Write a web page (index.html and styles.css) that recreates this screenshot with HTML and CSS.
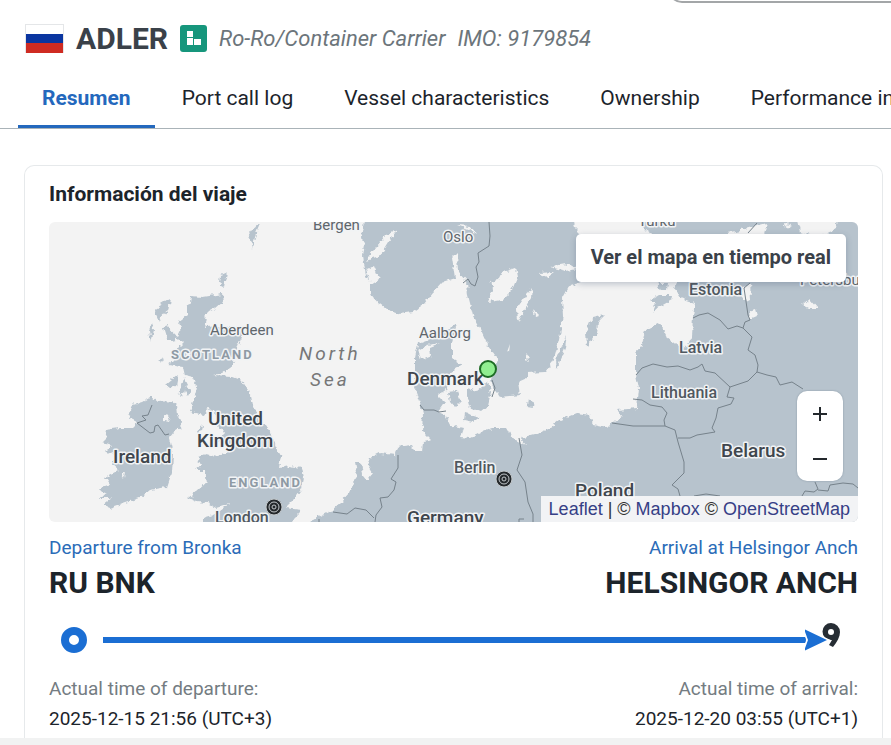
FILE: index.html
```html
<!DOCTYPE html>
<html lang="es">
<head>
    <meta charset="UTF-8">
    <meta name="viewport" content="width=device-width, initial-scale=1.0">
    <title>ADLER</title>
    <link rel="stylesheet" href="styles.css">
</head>
<body>
    <div class="search-edge"></div>

    <header class="vessel-header">
        <svg class="flag" viewBox="0 0 39 29" aria-hidden="true">
            <rect x="0.5" y="0.5" width="38" height="28" fill="#fff" stroke="#e4e6e8"/>
            <rect x="1" y="10" width="37" height="9" fill="#0a35a0"/>
            <rect x="1" y="19" width="37" height="10" fill="#cf2b22"/>
        </svg>
        <h1>ADLER</h1>
        <svg class="type-icon" viewBox="0 0 27 27" aria-hidden="true">
            <rect width="27" height="27" rx="3" fill="#16967c"/>
            <path d="M7 6h6v6H7zM7 13h6v7H7zM14 14h7v6h-7z" fill="#fff"/>
        </svg>
        <p class="vessel-type"><span>Ro-Ro/Container Carrier</span><span>IMO: 9179854</span></p>
    </header>

    <nav class="tabs">
        <a class="tab active" href="#resumen">Resumen</a>
        <a class="tab" href="#port-calls">Port call log</a>
        <a class="tab" href="#characteristics">Vessel characteristics</a>
        <a class="tab" href="#ownership">Ownership</a>
        <a class="tab" href="#performance">Performance insights</a>
    </nav>

    <main>
        <section class="card" id="resumen">
            <h2>Información del viaje</h2>

            <div class="map">
                <svg class="map-canvas" viewBox="49 222 809 300" preserveAspectRatio="xMidYMid slice" role="img" aria-label="Mapa">
                    <defs>
                        <filter id="coast" x="-5%" y="-5%" width="110%" height="110%" color-interpolation-filters="sRGB">
                            <feTurbulence type="fractalNoise" baseFrequency="0.2" numOctaves="2" seed="4"/>
                            <feDisplacementMap in="SourceGraphic" scale="6" xChannelSelector="R" yChannelSelector="G"/>
                        </filter>
                    </defs>

                    <g filter="url(#coast)">
                        <g class="land">
                            <!-- Great Britain -->
                            <path d="M191 296L203 297 222 294 223 302 216 308 209 312 204 317 207 321 205 327 225 326 243 330 242 336 238 347 230 358 234 364 222 373 213 375 232 376 240 379 249 390 252 405 262 420 272 435 276 447 281 456 279 468 290 466 302 468 304 478 302 488 295 498 285 508 302 510 293 519 290 530 203 530 203 518 213 515 220 511 230 504 217 508 207 503 197 502 188 498 197 491 207 482 205 470 196 470 202 465 198 457 206 454 217 457 228 452 226 444 218 440 224 434 218 424 215 412 208 409 205 415 190 412 193 402 197 388 193 378 185 376 183 367 168 365 178 358 177 348 182 343 177 338 182 328 178 322 187 315 187 308 190 303Z"/>
                            <!-- Ireland -->
                            <path d="M152 397L158 402 172 401 177 405 178 415 182 422 181 428 173 433 169 438 173 455 172 472 167 487 150 490 140 498 125 503 110 508 103 505 112 498 98 498 108 493 98 489 110 485 105 477 118 470 112 465 115 455 105 452 112 445 103 442 108 437 105 430 120 428 132 428 138 422 128 417 133 405 143 402Z"/>
                            <!-- Scottish isles, Orkney and Shetland -->
                            <path d="M170 299L157 307 155 312 159 321 164 314 168 311ZM152 324L154 330 151 342 149 331ZM163 327L168 325 172 332 178 336 174 342 167 340ZM166 385L178 375 176 386 170 388ZM184 378L179 397 183 394 187 384ZM187 385L191 390 188 396 184 391ZM220 275L227 272 224 287 219 283ZM260 224L255 236 253 249 251 240 247 237 253 229ZM203 424L202 431 196 433ZM158 361L164 358 161 363Z"/>
                            <!-- Norway and Sweden -->
                            <path d="M365 215L361 238 365 245 363 255 366 277 370 282 370 293 377 302 388 310 400 314 413 312 423 305 433 292 442 282 455 278 452 258 457 253 458 272 467 282 468 295 473 315 480 328 488 345 497 358 495 372 491 378 493 388 500 397 520 395 518 382 527 378 527 373 545 372 553 362 559 340 563 315 562 298 568 287 582 282 590 260 585 238 575 228 573 215Z"/>
                            <!-- Finland and north Russia -->
                            <path d="M638 215L645 230 660 240 720 236 790 260 770 275 700 272 677 280 675 290 680 298 695 303 693 315 692 338 683 349 667 337 660 323 645 330 642 345 636 352 636 375 639 388 637 408 617 410 623 417 612 423 607 428 593 425 590 415 577 413 560 420 550 428 535 434 520 438 526 445 513 438 507 428 493 428 482 432 470 438 460 437 463 428 450 425 445 415 438 412 445 402 438 395 447 388 450 372 462 365 452 358 452 342 457 323 440 335 418 343 415 358 415 388 420 402 423 415 422 430 432 440 423 442 422 452 415 452 412 445 397 447 395 455 380 453 370 458 367 465 372 473 367 480 363 475 361 462 355 462 357 472 350 492 340 503 332 510 313 520 300 530 870 530 870 215Z"/>
                            <!-- Danish and Baltic islands -->
                            <path d="M467 388L477 391 488 382 491 392 488 405 480 412 470 408 467 397ZM448 392L457 391 461 402 455 408 450 402ZM465 413L480 417 473 422 464 420ZM605 315L598 322 597 333 587 347 586 332 592 318ZM567 336L565 348 557 368 556 361 561 348ZM528 399L535 403 533 407 527 406ZM650 300L658 295 673 295 672 300 657 308 653 314 655 305ZM657 283L668 283 667 290 660 291Z"/>
                        </g>
                        <g class="water">
                            <path d="M503 272L515 268 517 278 512 290 502 300 488 302 493 288 490 282 499 280ZM532 287L531 298 518 322 517 308ZM533 309L538 315 535 316ZM510 344L509 353 507 352ZM526 354L529 358 526 361ZM538 273L555 272 548 277ZM553 266L565 264 562 268ZM164 415L170 416 168 422 164 421Z"/>
                            <path d="M377 247L386 236 397 230 388 243 380 256 366 261ZM366 270L374 266 379 278 370 284ZM418 350L427 345 440 343 430 347 431 356 421 360ZM550 267L570 264 578 269 566 271ZM440 392L447 397 443 402ZM457 225L471 226 476 234 470 230Z"/>
                            <path d="M796 215L800 232 815 237 833 232 839 215ZM741 289L750 283 751 300 745 303ZM749 311L755 309 757 316 750 319ZM803 305L810 299 818 308 809 308ZM727 233L745 229 767 223 764 235 730 238ZM782 224L793 225 787 228ZM122 474L125 472 124 477Z"/>
                        </g>
                    </g>

                    <g class="borders">
                        <path d="M152 405L148 415 142 416 146 420 137 423 150 433 154 432 155 426 158 425 165 435 169 434"/>
                        <path d="M489 222L490 236 489 246 478 253 479 262 476 267 478 277 475 286 471 284 468 279 463 283"/>
                        <path d="M492 380L495 388 492 397M420 405L424 410 434 410 439 412 446 411"/>
                        <path d="M398 455L398 468 391 479 396 482 394 490 388 497 380 498 382 507 376 515 375 522M333 512L347 514 355 508 366 510 374 518M319 519V522"/>
                        <path d="M519 438L522 455 517 470 525 482 528 502 533 514 533 522M519 522V519H524"/>
                        <path d="M612 423L633 426 665 426 675 430 678 442 684 462 684 473 672 485 678 489 680 496"/>
                        <path d="M633 399L642 400 650 405 662 407 667 413 664 420 665 426"/>
                        <path d="M636 375L642 368 653 364 667 367 678 366 690 370 698 367 702 364 705 371 715 373 730 387 748 381 757 372 758 365 755 355 748 350 752 337 743 328 737 326 728 329 720 320 708 313 699 315 693 318"/>
                        <path d="M750 283L744 288 748 315 750 320 745 322 743 328M748 233L757 223"/>
                        <path d="M757 372L767 375 776 377 780 385 792 382 803 389"/>
                        <path d="M730 387L727 397 734 398 731 404 718 408 716 418 712 428 715 432 709 433 697 435 690 438 678 438"/>
                        <path d="M802 496L805 491 814 492 818 489 815 482M818 490L828 491 830 485 843 483 853 484 858 488M694 496L706 494 720 496"/>
                    </g>

                    <g class="city">
                        <text x="313" y="230">Bergen</text>
                        <text x="443" y="242">Oslo</text>
                        <text x="638" y="226">Turku</text>
                        <text x="210" y="335">Aberdeen</text>
                        <text x="419" y="338">Aalborg</text>
                        <text x="800" y="285">Petersburg</text>
                    </g>
                    <g class="capital">
                        <text x="454" y="473">Berlin</text>
                        <text x="215" y="523">London</text>
                        <text x="689" y="295">Estonia</text>
                        <text x="679" y="353">Latvia</text>
                        <text x="651" y="398">Lithuania</text>
                    </g>
                    <g class="country">
                        <text x="208" y="425">United</text>
                        <text x="197" y="447">Kingdom</text>
                        <text x="113" y="463">Ireland</text>
                        <text x="407" y="385">Denmark</text>
                        <text x="407" y="524">Germany</text>
                        <text x="575" y="497">Poland</text>
                        <text x="721" y="457">Belarus</text>
                    </g>
                    <g class="region">
                        <text x="171" y="359">SCOTLAND</text>
                        <text x="229" y="487">ENGLAND</text>
                    </g>
                    <g class="sea">
                        <text x="299" y="360">North</text>
                        <text x="310" y="386">Sea</text>
                    </g>

                    <g class="port">
                        <circle cx="504" cy="479" r="8"/>
                        <circle cx="504" cy="479" r="5"/>
                        <circle cx="504" cy="479" r="2"/>
                        <circle cx="274" cy="507" r="8"/>
                        <circle cx="274" cy="507" r="5"/>
                        <circle cx="274" cy="507" r="2"/>
                    </g>
                    <circle class="vessel" cx="488" cy="369" r="8"/>
                </svg>

                <button class="live-map" type="button">Ver el mapa en tiempo real</button>

                <div class="zoom">
                    <button type="button" aria-label="Zoom in">
                        <svg viewBox="0 0 14 14"><path d="M7 0v14M0 7h14"/></svg>
                    </button>
                    <button type="button" aria-label="Zoom out">
                        <svg viewBox="0 0 14 14"><path d="M0 7h14"/></svg>
                    </button>
                </div>

                <div class="attribution"><a href="#leaflet">Leaflet</a> | © <a href="#mapbox">Mapbox</a> © <a href="#osm">OpenStreetMap</a></div>
            </div>

            <div class="ports">
                <div class="stop">
                    <a href="#bronka">Departure from Bronka</a>
                    <strong>RU BNK</strong>
                </div>
                <div class="stop arrival">
                    <a href="#helsingor">Arrival at Helsingor Anch</a>
                    <strong>HELSINGOR ANCH</strong>
                </div>
            </div>

            <div class="route">
                <span class="route-start"></span>
                <span class="route-line"></span>
                <svg class="route-end" viewBox="0 0 38 36" aria-hidden="true">
                    <path d="M26 1a9 9 0 0 1 9 9c0 5-3 10-7 15l-4-2 3-5h-1a8 8 0 0 1 0-17z" fill="#262d34"/>
                    <circle cx="26" cy="10" r="3" fill="#fff"/>
                    <path d="M-1 7L22 18 -1 29 3 18z" fill="#1b6ed3" stroke="#fff" stroke-width="3" paint-order="stroke"/>
                    <path d="M-2 15h2q2 3 0 6h-2z" fill="#1b6ed3"/>
                </svg>
            </div>

            <div class="times">
                <div class="time">
                    <span>Actual time of departure:</span>
                    <time datetime="2025-12-15T21:56+03:00">2025-12-15 21:56 (UTC+3)</time>
                </div>
                <div class="time arrival">
                    <span>Actual time of arrival:</span>
                    <time datetime="2025-12-20T03:55+01:00">2025-12-20 03:55 (UTC+1)</time>
                </div>
            </div>
        </section>
    </main>

    <footer></footer>
</body>
</html>
```
FILE: styles.css
```css
* {
    margin: 0;
    padding: 0;
    box-sizing: border-box;
}

body {
    min-height: 100vh;
    display: flex;
    flex-direction: column;
    font-family: Roboto, "Liberation Sans", sans-serif;
    background: #fff;
    color: #1c242b;
}

a {
    text-decoration: none;
}

.search-edge {
    width: 25%;
    height: 30px;
    margin-top: -27px;
    margin-left: auto;
    border-bottom: 2px solid #a3a6a8;
    border-left: 2px solid #a3a6a8;
    border-bottom-left-radius: 14px;
}

.vessel-header {
    display: flex;
    align-items: center;
    gap: 12px;
    height: 70px;
    padding: 0 25px;
}

.flag {
    width: 39px;
    height: 29px;
}

.vessel-header h1 {
    font-size: 30px;
    color: #3a4149;
}

.type-icon {
    width: 27px;
    height: 27px;
}

.vessel-type {
    display: flex;
    gap: 12px;
    font-size: 22px;
    font-style: italic;
    color: #6c757b;
}

.tabs {
    display: flex;
    gap: 3px;
    height: 56px;
    padding-left: 18px;
    border-bottom: 1px solid #aab3b8;
    overflow: hidden;
}

.tab {
    flex: none;
    padding: 0 24px;
    font-size: 21px;
    line-height: 50px;
    color: #1c242b;
}

.tab.active {
    font-weight: 700;
    color: #2468bd;
    border-bottom: 3px solid #2468bd;
}

main {
    flex: 1;
    display: flex;
    padding: 36px 8px 0 24px;
}

.card {
    flex: 1;
    padding: 12px 24px 4px;
    border: 1px solid #e6e9eb;
    border-bottom: 0;
    border-radius: 10px 10px 0 0;
}

.card h2 {
    margin-bottom: 12px;
    font-size: 21px;
    line-height: 32px;
}

.map {
    position: relative;
    height: 300px;
    border-radius: 6px;
    background: #f3f3f3;
    overflow: hidden;
}

.map-canvas {
    display: block;
    width: 100%;
    height: 100%;
}

.land {
    fill: #b7c3cd;
}

.water {
    fill: #f3f3f3;
}

.borders {
    fill: none;
    stroke: #76828b;
    stroke-width: 1;
}

.map-canvas text {
    stroke: #f1f3f5;
    stroke-width: 3;
    stroke-linejoin: round;
    paint-order: stroke;
}

.city {
    font-size: 15px;
    fill: #5f666c;
}

.capital {
    font-size: 16px;
    font-weight: 500;
    fill: #505860;
}

.country {
    font-size: 19px;
    font-weight: 500;
    fill: #3f464d;
}

.region {
    font-size: 13px;
    font-weight: 700;
    letter-spacing: 2px;
    fill: #8e9aa4;
}

.sea {
    font-size: 19px;
    font-style: italic;
    letter-spacing: 3px;
    fill: #777;
}

.port {
    fill: #24282b;
    stroke: #c3c8cb;
    stroke-width: 1;
}

.vessel {
    fill: #90ee90;
    stroke: #1d6b25;
    stroke-width: 2;
}

.live-map {
    position: absolute;
    top: 12px;
    right: 12px;
    height: 48px;
    padding: 0 15px 2px;
    border: 0;
    border-radius: 5px;
    background: #fff;
    box-shadow: 0 2px 6px rgba(60, 80, 110, 0.3);
    font: 700 20px Roboto, sans-serif;
    color: #3a4149;
}

.zoom {
    position: absolute;
    right: 15px;
    bottom: 41px;
    display: flex;
    flex-direction: column;
    width: 46px;
    border-radius: 10px;
    background: #fff;
    box-shadow: 0 0 2px rgba(60, 80, 100, 0.4);
}

.zoom button {
    display: grid;
    place-items: center;
    height: 45px;
    border: 0;
    background: none;
}

.zoom svg {
    width: 14px;
    height: 14px;
    fill: none;
    stroke: #23282c;
    stroke-width: 2;
}

.attribution {
    position: absolute;
    right: 0;
    bottom: 0;
    padding: 0 8px;
    background: rgba(248, 248, 250, 0.9);
    font: 18px/26px "Liberation Sans", sans-serif;
    color: #333;
}

.attribution a {
    color: #363f86;
}

.ports,
.times {
    display: flex;
    justify-content: space-between;
}

.stop,
.time {
    display: flex;
    flex-direction: column;
}

.arrival {
    align-items: flex-end;
}

.stop {
    padding-top: 13px;
}

.stop a {
    font-size: 19px;
    line-height: 26px;
    color: #2b6cb8;
}

.stop strong {
    font-size: 30px;
    line-height: 44px;
}

.route {
    display: flex;
    align-items: center;
    height: 69px;
    padding: 0 15px 0 12px;
}

.route-start {
    width: 26px;
    height: 26px;
    margin-right: 16px;
    border: 8px solid #1b6ed3;
    border-radius: 50%;
}

.route-line {
    flex: 1;
    height: 6px;
    background: #1b6ed3;
}

.route-end {
    width: 38px;
    height: 36px;
}

.time {
    font-size: 19px;
    line-height: 30px;
}

.time span {
    color: #747c82;
}

footer {
    height: 7px;
    background: #f1f2f2;
}
```
